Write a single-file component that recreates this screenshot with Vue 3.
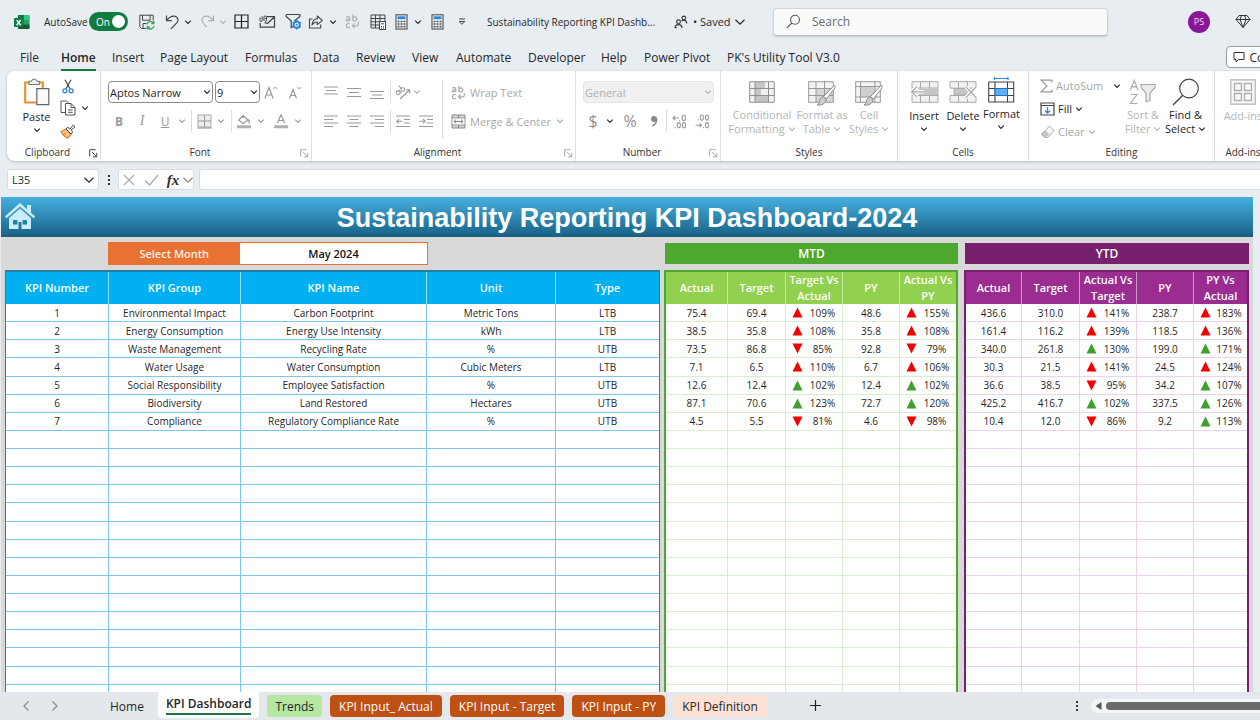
<script setup>
import { h } from 'vue'

const glyphs = {
  chev: [8, 8, '<path d="M1.2 2.6 4 5.4 6.8 2.6" stroke="currentColor" fill="none" stroke-width="1.2"/>'],
  chevWide: [12, 8, '<path d="M1.5 1.8 6 6.2 10.5 1.8" stroke="currentColor" fill="none" stroke-width="1.2"/>'],
  left: [8, 12, '<path d="M6.5 1.5 2 6l4.500 4.500" stroke="currentColor" fill="none" stroke-width="1.2"/>'],
  right: [8, 12, '<path d="M1.500 1.500 6 6l-4.500 4.500" stroke="currentColor" fill="none" stroke-width="1.2"/>'],
  excel: [16, 16, '<rect x="4" y="1" width="11.500" height="14" rx="1" fill="#21a366"/><path d="M4 1h6v5H4z" fill="#107c41"/><path d="M10 1h4.500a1 1 0 0 1 1 1v4H10z" fill="#33c481"/><path d="M4 10.500h11.500V14a1 1 0 0 1-1 1H5a1 1 0 0 1-1-1z" fill="#185c37"/><rect x="0" y="4" width="9.500" height="9" rx="1" fill="#107c41"/><path d="M2.700 6l4 5.200M6.700 6l-4 5.200" stroke="#fff" stroke-width="1.400"/>'],
  save: [16, 16, '<path d="M7 14.500H2.500l-1.700-1.700V1.200h13.400v5.300M3.500 1.200v5h7.600v-5M4 14.500V9.500h3.500" stroke="#444" fill="none"/><path d="M8 10.500a3.600 3.600 0 0 1 6.300-1.600M14.800 7v2.500h-2.500M15 12a3.600 3.600 0 0 1-6.300 1.700M8.200 15.500V13h2.500" stroke="#2fa25e" stroke-width="1.300" fill="none"/>'],
  undo: [16, 16, '<path d="M1.500 1.500v5.200h5.300M1.700 6.500C4 3.500 6.500 1.800 9.500 2.200c3.300.5 4.600 4 2.500 6.500L6 14.800" stroke="#444" fill="none" stroke-width="1.200"/>'],
  redo: [16, 16, '<path d="M13.500 1.500v5.200H8.200M13.300 6.500C11 3.500 8.500 1.800 5.500 2.200c-3.300.5-4.600 4-2.500 6.500l3.500 4.500" stroke="currentColor" fill="none" stroke-width="1.200"/>'],
  grid: [15, 15, '<path d="M1 1h13v13H1zM7.500 1v13M1 7.500h13" stroke="#222" fill="none" stroke-width="1.200"/>'],
  mail: [17, 14, '<path d="M7.500 1.700h8v10.500H1.200V8M15.500 1.700 8.500 8.500 5.500 7.500" stroke="#444" fill="none" stroke-width="1.200"/><path d="M3.200 1.200v4.300a1.100 1.100 0 0 1-2.200 0V2.500M5 6V2.200a1.200 1.200 0 0 1 2.500 0v3.200a1.200 1.200 0 0 1-1.500 1M5.800 3.500h1" stroke="#444" fill="none"/>'],
  funnel: [17, 17, '<path d="M1.200 1.500h13.600v2L9.500 8M1.200 1.500v2l5 4.600v6.400l2-1" stroke="#444" fill="none" stroke-width="1.200"/><circle cx="11.700" cy="11.700" r="3.100" stroke="#2482d6" stroke-width="1.800" fill="#e8edf1"/><path d="M11.700 7v2M11.700 14.400v2M7.600 9.400l1.700 1M14 13l1.800 1M7.600 14l1.700-1M14 10.400l1.800-1" stroke="#2482d6" stroke-width="1.400"/><circle cx="11.700" cy="11.700" r="1" fill="#2482d6"/>'],
  share: [16, 16, '<path d="M4.500 5H1.500v9h11.200v-3.500" stroke="#444" fill="none" stroke-width="1.100"/><path d="M9.300 2v2.700C6 5 4.500 7.500 4 10.800c1.500-2 3-2.800 5.300-2.800v2.700L14.300 6.300z" stroke="#444" fill="none" stroke-width="1.100" stroke-linejoin="round"/>'],
  wrap: [15, 15, '<g fill="none" stroke="currentColor" stroke-width="1.200"><path d="M1.300 3.200c1.400-1 3.500-.8 3.500.8v2.800M4.800 4.800c-4-.3-4.600 2-2.400 2 1.300 0 2.400-.8 2.400-1.600"/><path d="M7.800.5v6.300M7.800 4.900c0-2.800 4-2.800 4 0s-4 2.800-4 0"/><path d="M4.800 9.800c-2-1.200-3.500.2-3.500 1.800s1.700 2.900 3.500 1.700"/><path d="M13.300 8v2.200a1.600 1.600 0 0 1-1.600 1.600H7.500M9.700 9.500l-2.300 2.300 2.300 2.300"/></g>'],
  pivot: [16, 16, '<path d="M1 1h14v6M1 1v13h8M1 4.500h14M1 7.800h9M1 11h8M5.500 1v13M10 1v6" stroke="#444" fill="none"/><rect x="9.500" y="7.500" width="6" height="8" fill="#fff" stroke="#444"/><rect x="11" y="9" width="3" height="1.500" fill="#3b95dd"/><path d="M11 12.500h3M11 14h3" stroke="#444" stroke-dasharray="1 1"/>'],
  calc: [13, 16, '<rect x="1" y=".8" width="11" height="14.200" fill="#fff" stroke="#555" stroke-width="1.200"/><rect x="2.500" y="2.300" width="8" height="3" fill="#2b88d8"/><path d="M2.500 7.500h8M2.500 10h8M2.500 12.700h8" stroke="#444" stroke-width="1.700" stroke-dasharray="2 1"/>'],
  custom: [8, 8, '<path d="M1 1h6M1.200 3.500 4 6.300l2.800-2.800z" stroke="#444" fill="none"/>'],
  people: [14, 14, '<g stroke="#333" fill="none" stroke-width="1.100"><circle cx="4.500" cy="6.800" r="1.900"/><path d="M1 13c0-4.500 7-4.500 7 0"/><circle cx="9.800" cy="2.900" r="1.800"/><path d="M7.500 6.200c2-2 5.300-1 5.300 2.300M1 12.800h1.800"/></g>'],
  search: [15, 15, '<circle cx="9" cy="5.700" r="4.500" stroke="#555" fill="none" stroke-width="1.100"/><path d="M5.800 9 1 13.800" stroke="#555" stroke-width="1.200"/>'],
  gem: [16, 15, '<path d="M4 1.500h8l3 4-7 8-7-8zM1 5.500h14M5 5.500l3 8 3-8M5 5.500 6.500 1.500M11 5.500 9.500 1.500" stroke="#333" fill="none" stroke-linejoin="round"/>'],
  comment: [12, 12, '<path d="M1 1.500h10v7H5.500L3 11V8.500H1z" stroke="#333" fill="none"/>'],
  paste: [27, 28, '<path d="M2.200 4.500h17.600v20H2.200z" fill="#fff" stroke="#e8912d" stroke-width="2.200"/><path d="M6 6.500V3.200h2.500C9.300.2 13 .2 13.800 3.200h2.500v3.300z" fill="#f4f4f4" stroke="#777" stroke-width="1.100"/><path d="M13.800 10.700h12v16h-12z" fill="#fafafa" stroke="#666" stroke-width="1.200"/>'],
  cut: [12, 15, '<path d="M3 .8 8 9.700M9 .8 4 9.700" stroke="#444" stroke-width="1.200"/><circle cx="2.900" cy="11.800" r="2" fill="none" stroke="#2b88d8" stroke-width="1.300"/><circle cx="9.100" cy="11.800" r="2" fill="none" stroke="#2b88d8" stroke-width="1.300"/>'],
  copy: [16, 16, '<path d="M5 12.500H1V1h5.500L8.500 3M5.500 3.500H11l4 4V15H5.500zM11 3.500v4h4M8 10h4.500M8 12.300h4.500" stroke="#555" fill="none"/>'],
  brush: [16, 15, '<path d="M1 7.500 6 5l5 5.200L8 14C4.500 12.700 2.300 10.500 1 7.500z" fill="#f8c78e" stroke="#e8832d" stroke-width="1.300"/><path d="M3 10.500 6 9" stroke="#e8832d"/><path d="M6 5l1.800-1.800L9.800 5l3.500-4 1.700 1.700L11 6.300 12.700 8 11 10z" fill="#fff" stroke="#444"/>'],
  launch: [9, 9, '<path d="M.7 7.500V.7h6M3 3l4.500 4.500M7.800 3.800v4H3.800" stroke="currentColor" fill="none"/>'],
  borders: [15, 15, '<rect x="1" y="1" width="13" height="12" fill="#ededed" stroke="#aaa"/><path d="M7.500 1v12M1 7h13" stroke="#999"/><path d="M.5 14h14" stroke="#888"/>'],
  bucket: [16, 15, '<path d="M7 1.500 12 6 7 9.800 2.800 6zM7 4V.8M12 5.500c1.500 1 1.500 2.500 1 4" fill="none" stroke="#999" stroke-width="1.200"/><path d="M1 11.200h14v3H1z" fill="#b0b0b0"/>'],
  fontColor: [16, 15, '<path d="M4.300 9.300 8 .8l3.700 8.500M5.500 6.500h5" fill="none" stroke="#999" stroke-width="1.200"/><path d="M1 11.200h14v3H1z" fill="#b0b0b0"/>'],
  grow: [14, 15, '<path d="M.8 13.500 5 2.500l4.200 11M2.200 10h5.600" stroke="#999" fill="none" stroke-width="1.200"/><path d="m9.500 4 1.900-2L13.300 4" stroke="#999" fill="none"/>'],
  shrink: [14, 15, '<path d="M1.500 13.500 5 4.500l3.500 9M2.700 10.500h4.600" stroke="#999" fill="none" stroke-width="1.200"/><path d="m9.500 2 1.900 2 1.900-2" stroke="#999" fill="none"/>'],
  top: [14, 15, '<path d="M0 2h14M2 5.500h10M0 9h14" stroke="#999" stroke-width="1.200"/>'],
  mid: [14, 15, '<path d="M0 3.500h14M2 7.500h10M0 11.500h14" stroke="#999" stroke-width="1.200"/>'],
  bot: [14, 15, '<path d="M0 6.500h14M2 10h10M0 13.500h14" stroke="#999" stroke-width="1.200"/>'],
  alL: [14, 13, '<path d="M0 1h14M0 4.500h9M0 8h14M0 11.500h9" stroke="#999" stroke-width="1.200"/>'],
  alC: [14, 13, '<path d="M0 1h14M2.500 4.500h9M0 8h14M2.500 11.500h9" stroke="#999" stroke-width="1.200"/>'],
  alR: [14, 13, '<path d="M0 1h14M5 4.500h9M0 8h14M5 11.500h9" stroke="#999" stroke-width="1.200"/>'],
  outdent: [14, 13, '<path d="M0 1h14M8 4.500h6M8 8h6M0 11.500h14M1 6.300h5.500M3 4.200.8 6.300 3 8.400" stroke="#999" fill="none" stroke-width="1.100"/>'],
  indent: [14, 13, '<path d="M0 1h14M8 4.500h6M8 8h6M0 11.500h14M.5 6.300H6M4 4.200l2.200 2.100L4 8.400" stroke="#999" fill="none" stroke-width="1.100"/>'],
  orient: [16, 15, '<g fill="none" stroke="#999" stroke-width="1.100"><circle cx="3.200" cy="7.800" r="1.900"/><path d="m3.700 5.200 2.600 2.900"/><circle cx="7.800" cy="4.600" r="1.900"/><path d="m3.800.7 3 3.500"/><path d="M5 14 14.500 5M11 4.800h3.700v3.700"/></g>'],
  merge: [15, 15, '<path d="M1 1h13v13H1zM1 4h13M1 11h13M7.500 1v3M7.500 11v3" stroke="#888" fill="#d8d8d8"/><path d="M1.500 4.500h12v6h-12z" fill="#f4f4f4"/><path d="M3 7.500h9M5 5.700 3 7.500l2 1.800M10 5.700l2 1.800-2 1.800" stroke="#888" fill="none"/>'],
  comma: [8, 12, '<circle cx="4" cy="4" r="3" fill="#888"/><path d="M6.500 3.500c.5 3.500-1 6-4 7.500" stroke="#888" stroke-width="1.500" fill="none"/>'],
  moreDec: [15, 15, '<g fill="none" stroke="#999" stroke-width="1.100"><path d="M7 4H1M3 2 1 4l2 2M7.500 6.200v1"/><ellipse cx="11.800" cy="4" rx="1.600" ry="2.700"/><ellipse cx="6.800" cy="11.200" rx="1.600" ry="2.600"/><ellipse cx="12" cy="11.200" rx="1.600" ry="2.600"/><path d="M3 13v1.200"/></g>'],
  lessDec: [15, 15, '<g fill="none" stroke="#999" stroke-width="1.100"><path d="M.5 11.300h6M4.500 9.300l2 2-2 2M8.500 13v1.200"/><ellipse cx="12" cy="11.200" rx="1.600" ry="2.600"/><ellipse cx="6.800" cy="3.600" rx="1.600" ry="2.600"/><ellipse cx="12" cy="3.600" rx="1.600" ry="2.600"/><path d="M3.500 5.300v1.200"/></g>'],
  cond: [26, 22, '<path d="M.7.700h24.600v20.600H.7z" fill="#f1f1f1"/><path d="M6 1h10v6.500H6zM6 8h6v6.500H6zM6 14.500h13V21H6z" fill="#c4c4c4"/><path d="M.7.700h24.600v20.600H.7zM.7 7.500h24.600M.7 14.500h24.600M6 .7v20.600M19.500.7v20.600" stroke="#8f8f8f" fill="none"/>'],
  fmtTable: [28, 26, '<path d="M.7.700h24.600v20.600H.7z" fill="#f4f4f4"/><path d="M8 7h17.300v14H8z" fill="#d6d6d6"/><path d="M.7.700h24.600v20.600H.7zM.7 7.500h24.600M.7 14.500h24.600M8 .7v20.600M16.500.7v20.600" stroke="#999" fill="none"/><path d="M26 4.500c1.500 0 1.500 1.200.8 2.500L18.500 18l-3-2.500z" fill="#fff" stroke="#888"/><path d="M15 15.500l3.300 3c-.8 4.500-5 6-9.300 5.500 3-1.500 2-7 6-8.500z" fill="#ccc" stroke="#888"/>'],
  cellStyle: [28, 26, '<path d="M.7.700h24.600v20.600H.7z" fill="#f4f4f4"/><path d="M6 6h14v10H6z" fill="#cfcfcf"/><path d="M.7.700h24.600v20.600H.7zM.7 5.500h24.600M.7 16h24.600M5.500.7v20.600M20 .7v20.600" stroke="#999" fill="none"/><path d="M26 4.500c1.500 0 1.500 1.200.8 2.500L18.500 18l-3-2.500z" fill="#fff" stroke="#888"/><path d="M15 15.500l3.300 3c-.8 4.500-5 6-9.300 5.500 3-1.500 2-7 6-8.500z" fill="#ccc" stroke="#888"/>'],
  insert: [29, 22, '<path d="M2 .7h26v20.600H2zM2 7h26M2 14.500h26M10.500.7v20.600M19.500.7v20.600" stroke="#aaa" fill="#f2f2f2"/><path d="M9 7.500h19v6.500H9z" fill="#c6c6c6"/><path d="M14 10.800H2M7 5.500 1.500 10.800 7 16" stroke="#fff" stroke-width="3.500" fill="none"/><path d="M14 10.800H1.500M7 5.500 1.500 10.800 7 16" stroke="#aaa" stroke-width="1.200" fill="none"/>'],
  remove: [29, 22, '<path d="M1 .7h26v6.500H1zM1 14.500h26v6.800H1zM9.500.7v6.500M18.500.7v6.500M9.500 14.500v6.800M18.500 14.500v6.800" stroke="#aaa" fill="#f2f2f2"/><path d="M5 7.500h13v6.500H5z" fill="#c6c6c6" stroke="#aaa"/><path d="m17 6 10 10.500M27 6 17 16.500" stroke="#fff" stroke-width="3.500"/><path d="m17 6 10 10.500M27 6 17 16.500" stroke="#aaa" stroke-width="1.200"/>'],
  format: [27, 26, '<path d="M6.500 1.500h13.500M6.500 0v3M20 0v3" stroke="#2b88d8" stroke-width="1.200"/><path d="M.7 5h25v20H.7zM.7 11.500h25M.7 18.500h25M7 5v20M19.500 5v20" stroke="#444" fill="#fff" stroke-width="1.100"/><path d="M7 11.500h12.500v7H7z" fill="#62aef0" stroke="#1a73c4"/>'],
  sum: [13, 14, '<path d="M12 3.500V1.200H1.200L7 7 1.200 12.800H12v-2.300" stroke="#999" fill="none" stroke-width="1.200"/>'],
  fill: [15, 14, '<path d="M1 1h13v12H1zM1 3.500h13" stroke="#444" fill="#fff" stroke-width="1.200"/><path d="M7.500 5v6M5 8.500 7.500 11 10 8.500" stroke="#2b88d8" fill="none" stroke-width="1.300"/>'],
  eraser: [15, 14, '<path d="M5 6 9.500 1 14 5.500 8 12.500H4.500L1 9z" stroke="#aaa" fill="#f6f6f6"/><path d="M5 5.500 1 9l3.500 3.500H6L9.500 9z" fill="#c4c4c4"/>'],
  sort: [28, 26, '<g stroke="#aaa" fill="none" stroke-width="1.200"><path d="m1.500 11 3.700-9.500L9 11M2.800 7.800h5M1.700 15.500H8L1.500 24.500h7"/><path d="M12 5.500h14v3L21 14v7.500l-4 1V14l-5-5.500z" fill="#ececec"/></g>'],
  find: [28, 28, '<circle cx="17" cy="10.500" r="9.300" fill="#fafafa" stroke="#444" stroke-width="1.200"/><path d="M10.500 17.500 1 27" stroke="#444" stroke-width="1.400"/>'],
  addins: [26, 26, '<path d="M.8.800h24.400v24.400H.8z" fill="#fafafa" stroke="#b0b0b0" stroke-width="1.200"/><path d="M4.500 4.500h7v7h-7zM14.500 4.500h7v7h-7zM4.500 14.500h7v7h-7zM14.500 14.500h7v7h-7z" fill="none" stroke="#b0b0b0" stroke-width="1.400"/>'],
  cross: [12, 12, '<path d="m1 1 10 10M11 1 1 11" stroke="#aaa" stroke-width="1.200"/>'],
  tick: [15, 12, '<path d="m1 6.500 4.500 4.500L14 1" stroke="#aaa" fill="none" stroke-width="1.200"/>'],
  dots: [4, 12, '<path d="M1 1h2v2H1zM1 5h2v2H1zM1 9h2v2H1z" fill="#333"/>'],
  house: [32, 28, '<g fill="#c9edfb"><path d="M16 1 .8 14.500 2.500 16.300 16 4.500l13.500 11.800 1.700-1.800L27 10.800V3h-4v4.200z"/><path d="M16 6.500 5 16v11h22V16zM9 18h4.500v4.500H9zM18.500 18H23v4.500h-4.500zM14.500 20h3v7h-3z" fill-rule="evenodd"/></g>'],
  up: [11, 11, '<path d="M5.500.5 10.500 10.500H.5z" fill="currentColor"/>'],
  down: [11, 11, '<path d="M.5.500h10L5.500 10.500z" fill="currentColor"/>'],
  scrollL: [7, 8, '<path d="M6.500 0v8L.5 4z" fill="#555"/>'],
  plus: [11, 11, '<path d="M5.500 0v11M0 5.500h11" stroke="#222" stroke-width="1.200"/>']
}

const Icon = (props) => {
  const [w, ht, body] = glyphs[props.n]
  return h('svg', { width: w, height: ht, viewBox: `0 0 ${w} ${ht}`, 'aria-hidden': 'true', innerHTML: body })
}
Icon.props = ['n']

const menu = ['File', 'Home', 'Insert', 'Page Layout', 'Formulas', 'Data', 'Review', 'View', 'Automate', 'Developer', 'Help', 'Power Pivot', "PK's Utility Tool V3.0"]

const kpis = [
  ['1', 'Environmental Impact', 'Carbon Footprint', 'Metric Tons', 'LTB'],
  ['2', 'Energy Consumption', 'Energy Use Intensity', 'kWh', 'LTB'],
  ['3', 'Waste Management', 'Recycling Rate', '%', 'UTB'],
  ['4', 'Water Usage', 'Water Consumption', 'Cubic Meters', 'LTB'],
  ['5', 'Social Responsibility', 'Employee Satisfaction', '%', 'UTB'],
  ['6', 'Biodiversity', 'Land Restored', 'Hectares', 'UTB'],
  ['7', 'Compliance', 'Regulatory Compliance Rate', '%', 'UTB']
]
// Ratio cells carry a direction (u/d) and a status colour (r/g) before the percentage.
const mtd = [
  ['75.4', '69.4', 'ur109%', '48.6', 'ur155%'],
  ['38.5', '35.8', 'ur108%', '35.8', 'ur108%'],
  ['73.5', '86.8', 'dr85%', '92.8', 'dr79%'],
  ['7.1', '6.5', 'ur110%', '6.7', 'ur106%'],
  ['12.6', '12.4', 'ug102%', '12.4', 'ug102%'],
  ['87.1', '70.6', 'ug123%', '72.7', 'ug120%'],
  ['4.5', '5.5', 'dr81%', '4.6', 'dr98%']
]
const ytd = [
  ['436.6', '310.0', 'ur141%', '238.7', 'ur183%'],
  ['161.4', '116.2', 'ur139%', '118.5', 'ur136%'],
  ['340.0', '261.8', 'ug130%', '199.0', 'ug171%'],
  ['30.3', '21.5', 'ur141%', '24.5', 'ur124%'],
  ['36.6', '38.5', 'dr95%', '34.2', 'ug107%'],
  ['425.2', '416.7', 'ug102%', '337.5', 'ug126%'],
  ['10.4', '12.0', 'dr86%', '9.2', 'ug113%']
]
const pad = (rows) => [...rows, ...Array.from({ length: 22 - rows.length }, () => ['', '', '', '', ''])]
const tables = [
  { id: 'kpi', heads: ['KPI Number', 'KPI Group', 'KPI Name', 'Unit', 'Type'], rows: pad(kpis) },
  { id: 'mtd', heads: ['Actual', 'Target', 'Target Vs Actual', 'PY', 'Actual Vs PY'], rows: pad(mtd) },
  { id: 'ytd', heads: ['Actual', 'Target', 'Actual Vs Target', 'PY', 'PY Vs Actual'], rows: pad(ytd) }
]
const isRatio = (v) => /^[ud][rg]/.test(v)

const sheets = [
  ['Home', 'plain'], ['KPI Dashboard', 'active'], ['Trends', 'green'], ['KPI Input_ Actual', 'rust'],
  ['KPI Input - Target', 'rust'], ['KPI Input - PY', 'rust'], ['KPI Definition', 'peach']
]
</script>

<template>
  <div class="excel">
    <header class="titlebar">
      <Icon n="excel" />
      <span class="auto">AutoSave</span>
      <button class="toggle" aria-label="AutoSave">On<i></i></button>
      <button aria-label="Save"><Icon n="save" /></button>
      <button aria-label="Undo"><Icon n="undo" /></button>
      <button aria-label="Undo list"><Icon n="chev" /></button>
      <button class="off" aria-label="Redo"><Icon n="redo" /></button>
      <button class="off" aria-label="Redo list"><Icon n="chev" /></button>
      <button aria-label="Borders"><Icon n="grid" /></button>
      <button aria-label="Mail"><Icon n="mail" /></button>
      <button aria-label="Filter"><Icon n="funnel" /></button>
      <button aria-label="Share"><Icon n="share" /></button>
      <button aria-label="Share options"><Icon n="chev" /></button>
      <button class="off" aria-label="Wrap"><Icon n="wrap" /></button>
      <button aria-label="Pivot"><Icon n="pivot" /></button>
      <button aria-label="Calculate"><Icon n="calc" /></button>
      <button aria-label="Calculate options"><Icon n="chev" /></button>
      <button aria-label="Calculator"><Icon n="calc" /></button>
      <button aria-label="Customize toolbar"><Icon n="custom" /></button>
      <span class="doc">Sustainability Reporting KPI Dashb...</span>
      <Icon n="people" />
      <span class="saved">• Saved</span>
      <button aria-label="File status"><Icon n="chevWide" /></button>
      <label class="search"><Icon n="search" /><input type="text" placeholder="Search" aria-label="Search" /></label>
      <button class="avatar" aria-label="Account">PS</button>
      <button aria-label="Premium"><Icon n="gem" /></button>
    </header>

    <nav class="menu">
      <a v-for="m in menu" :key="m" href="#" :class="{ on: m === 'Home' }">{{ m }}</a>
      <button class="comments"><Icon n="comment" />Comments</button>
    </nav>

    <section class="ribbon">
      <div class="group">
        <div class="body clip">
          <button class="big paste"><Icon n="paste" />Paste<Icon n="chev" /></button>
          <div class="stack">
            <button aria-label="Cut"><Icon n="cut" /></button>
            <button aria-label="Copy"><Icon n="copy" /></button>
            <button aria-label="Format painter"><Icon n="brush" /></button>
          </div>
          <button aria-label="Copy options"><Icon n="chev" /></button>
        </div>
        <footer class="launchable">Clipboard<Icon n="launch" class="launch dark" /></footer>
      </div>

      <div class="group">
        <div class="body two">
          <div class="fontrow">
            <label class="drop"><select aria-label="Font"><option>Aptos Narrow</option></select><Icon n="chev" /></label>
            <label class="drop"><select aria-label="Font size"><option>9</option></select><Icon n="chev" /></label>
            <button aria-label="Increase font size"><Icon n="grow" /></button>
            <button aria-label="Decrease font size"><Icon n="shrink" /></button>
          </div>
          <div class="fmt">
            <button><b>B</b></button><button><em>I</em></button><button><u>U</u></button>
            <button aria-label="Underline options"><Icon n="chev" /></button><i class="sep"></i>
            <button aria-label="Borders"><Icon n="borders" /></button>
            <button aria-label="Border options"><Icon n="chev" /></button><i class="sep"></i>
            <button aria-label="Fill color"><Icon n="bucket" /></button>
            <button aria-label="Fill options"><Icon n="chev" /></button>
            <button aria-label="Font color"><Icon n="fontColor" /></button>
            <button aria-label="Font color options"><Icon n="chev" /></button>
          </div>
        </div>
        <footer class="launchable">Font<Icon n="launch" class="launch" /></footer>
      </div>

      <div class="group">
        <div class="body align">
          <div class="alignment">
            <button aria-label="Top align"><Icon n="top" /></button>
            <button aria-label="Middle align"><Icon n="mid" /></button>
            <button aria-label="Bottom align"><Icon n="bot" /></button>
            <i class="sep"></i>
            <button aria-label="Orientation"><Icon n="orient" /></button>
            <button class="start" aria-label="Orientation options"><Icon n="chev" /></button>
            <button aria-label="Align left"><Icon n="alL" /></button>
            <button aria-label="Center"><Icon n="alC" /></button>
            <button aria-label="Align right"><Icon n="alR" /></button>
            <i class="sep"></i>
            <button aria-label="Decrease indent"><Icon n="outdent" /></button>
            <button aria-label="Increase indent"><Icon n="indent" /></button>
          </div>
          <div class="wraps">
            <button class="line"><Icon n="wrap" />Wrap Text</button>
            <button class="line"><Icon n="merge" />Merge &amp; Center<Icon n="chev" class="far" /></button>
          </div>
        </div>
        <footer class="launchable">Alignment<Icon n="launch" class="launch" /></footer>
      </div>

      <div class="group">
        <div class="body two">
          <label class="drop disabled"><select disabled aria-label="Number format"><option>General</option></select><Icon n="chev" /></label>
          <div class="num">
            <button class="sign">$</button><button class="ink" aria-label="Currency options"><Icon n="chev" /></button>
            <button class="sign">%</button><button aria-label="Comma style"><Icon n="comma" /></button><i class="sep"></i>
            <button aria-label="Increase decimal"><Icon n="moreDec" /></button>
            <button aria-label="Decrease decimal"><Icon n="lessDec" /></button>
          </div>
        </div>
        <footer class="launchable">Number<Icon n="launch" class="launch" /></footer>
      </div>

      <div class="group">
        <div class="body styles">
          <button class="big off"><Icon n="cond" /><span>Conditional<br />Formatting <Icon n="chev" /></span></button>
          <button class="big off"><Icon n="fmtTable" /><span>Format as<br />Table <Icon n="chev" /></span></button>
          <button class="big off"><Icon n="cellStyle" /><span>Cell<br />Styles <Icon n="chev" /></span></button>
        </div>
        <footer>Styles</footer>
      </div>

      <div class="group">
        <div class="body cells">
          <button class="big"><Icon n="insert" />Insert<Icon n="chev" /></button>
          <button class="big"><Icon n="remove" />Delete<Icon n="chev" /></button>
          <button class="big"><Icon n="format" />Format<Icon n="chev" /></button>
        </div>
        <footer>Cells</footer>
      </div>

      <div class="group">
        <div class="body editing">
          <div class="lines">
            <button class="line"><Icon n="sum" />AutoSum<Icon n="chev" class="far ink" /></button>
            <button class="line ink"><Icon n="fill" />Fill<Icon n="chev" /></button>
            <button class="line"><Icon n="eraser" />Clear<Icon n="chev" /></button>
          </div>
          <button class="big off"><Icon n="sort" /><span>Sort &amp;<br />Filter <Icon n="chev" /></span></button>
          <button class="big"><Icon n="find" /><span>Find &amp;<br />Select <Icon n="chev" /></span></button>
        </div>
        <footer>Editing</footer>
      </div>

      <div class="group last">
        <div class="body addins"><button class="big off"><Icon n="addins" /><span>Add-ins</span></button></div>
        <footer>Add-ins</footer>
      </div>
    </section>

    <section class="formula">
      <label class="namebox"><input type="text" value="L35" aria-label="Name box" /><Icon n="chevWide" /></label>
      <Icon n="dots" />
      <div class="fx">
        <button aria-label="Cancel"><Icon n="cross" /></button>
        <button aria-label="Enter"><Icon n="tick" /></button>
        <button class="fn">fx</button>
        <button aria-label="Formula options"><Icon n="chevWide" /></button>
      </div>
      <input class="entry" type="text" aria-label="Formula" />
    </section>

    <main class="sheet">
      <div class="canvas">
        <div class="banner">
          <a href="#" aria-label="Home"><Icon n="house" /></a>
          <h1>Sustainability Reporting KPI Dashboard-2024</h1>
        </div>
        <div class="board">
          <div class="picker"><b>Select Month</b><strong>May 2024</strong></div>
          <div class="band mtd">MTD</div>
          <div class="band ytd">YTD</div>
          <table v-for="t in tables" :key="t.id" :class="t.id">
            <colgroup><col v-for="n in 5" :key="n" :class="'c' + n" /></colgroup>
            <thead><tr><th v-for="(x, i) in t.heads" :key="i" scope="col">{{ x }}</th></tr></thead>
            <tbody>
              <tr v-for="(r, i) in t.rows" :key="i">
                <td v-for="(v, j) in r" :key="j">
                  <span v-if="isRatio(v)" class="ratio">
                    <Icon :n="v[0] === 'u' ? 'up' : 'down'" :class="v[1] === 'r' ? 'red' : 'grn'" />{{ v.slice(2) }}
                  </span>
                  <template v-else>{{ v }}</template>
                </td>
              </tr>
            </tbody>
          </table>
        </div>
      </div>
    </main>

    <footer class="tabs">
      <div class="arrows">
        <button aria-label="Previous sheets"><Icon n="left" /></button>
        <button aria-label="Next sheets"><Icon n="right" /></button>
      </div>
      <button v-for="[name, kind] in sheets" :key="name" class="tab" :class="kind"><span>{{ name }}</span></button>
      <button class="add" aria-label="New sheet"><Icon n="plus" /></button>
      <Icon n="dots" />
      <div class="scroll"><Icon n="scrollL" /><i></i></div>
    </footer>
  </div>
</template>

<style>
html, body { margin: 0; overflow: hidden; }
</style>

<style scoped>
.excel { height: 100vh; display: flex; flex-direction: column; overflow: hidden; background: #e8edf1; color: #262626; font-family: "Open Sans", "Noto Sans", sans-serif; font-size: 11px; }
.excel * { box-sizing: border-box; }
button { border: 0; padding: 0; background: none; font: inherit; color: inherit; display: flex; align-items: center; justify-content: center; }
input, select { border: 0; background: none; font: inherit; color: inherit; outline: 0; min-width: 0; }
svg { flex: none; display: block; }
a { color: inherit; text-decoration: none; }
.off { color: #b0b0b0; }

.titlebar { flex: none; height: 43px; padding: 0 9px 0 14px; display: grid; align-items: center; justify-items: start; white-space: nowrap;
  grid-template-columns: 30px 45px 50px 26px 19px 16px 19px 15px 25px 26px 23px 21px 16px 25px 25px 19px 17px 27px 29px 187px 19px 41px 39px 1fr 47px 16px; }
.auto, .doc { font-size: 10px; }
.saved { font-size: 11px; }
.toggle { width: 39px; height: 19px; padding: 0 3px 0 7px; border-radius: 10px; background: #107c41; color: #fff; justify-content: space-between; font-size: 10px; }
.toggle i { width: 13px; height: 13px; border-radius: 50%; background: #fff; }
.search { justify-self: stretch; height: 28px; margin-right: 80px; padding: 0 12px; display: flex; align-items: center; gap: 9px; background: #fafafa; border: 1px solid #d2d5d9; border-bottom-color: #b5b8bc; border-radius: 4px; box-shadow: 0 1px 2px #0002; }
.search input { flex: 1; font-size: 12px; }
.search input::placeholder { color: #6a6a6a; opacity: 1; }
.avatar { width: 22px; height: 22px; border-radius: 50%; background: #881798; color: #f3dff5; font-size: 9px; }

.menu { flex: none; height: 28px; padding-left: 20px; display: grid; align-items: center; justify-items: start; white-space: nowrap; font-size: 12px;
  grid-template-columns: 41px 51px 48px 85px 68px 43px 56px 44px 72px 73px 43px 83px 1fr 34px; }
.menu .on { font-weight: 600; height: 24px; line-height: 21px; align-self: end; border-bottom: 2px solid #107c41; }
.comments { height: 22px; width: 92px; gap: 4px; background: #fff; border: 1px solid #9a9a9a; border-radius: 4px; font-size: 12px; }

.ribbon { flex: none; height: 90px; margin-left: 7px; display: grid; background: #fff; border-radius: 8px 0 0 8px; box-shadow: 0 1px 3px #0003; font-size: 11px;
  grid-template-columns: 94px 211px 264px 145px 177px 131px 186px minmax(46px, 1fr); overflow: hidden; }
.group { display: flex; flex-direction: column; border-right: 1px solid #dcdcdc; min-width: 0; }
.last { border-right: 0; }
.body { height: 73px; color: #a8a8a8; }
.group footer { position: relative; flex: 1; text-align: center; font-size: 10px; line-height: 16px; color: #333; }
.group .launchable { padding-right: 12px; }
.launch { position: absolute; right: 2px; top: 5px; color: #aaa; }
.dark { color: #444; }
.ink { color: #262626; }
.sep { width: 1px; height: 22px; background: #dcdcdc; }
.big { flex-direction: column; justify-content: flex-start; color: #262626; line-height: 14px; white-space: nowrap; }
.big.off { color: #b4b4b4; }
.big > svg:first-child { margin-bottom: 4px; }
.big > svg:last-child { margin-top: 2px; }
.big span svg { display: inline-block; }

.clip { display: grid; grid-template-columns: 47px 15px 20px; padding: 7px 0 0 6px; justify-items: center; }
.paste { width: 47px; }
.stack { display: grid; grid-template-rows: 16px 28px 18px; align-items: center; align-content: start; justify-items: center; }
.clip > :last-child { height: 60px; color: #333; }
.two { display: flex; flex-direction: column; gap: 6px; padding: 10px 6px 0 7px; }
.fontrow { display: grid; grid-template-columns: 105px 45px 18px 26px; column-gap: 2px; align-items: center; }
.drop { position: relative; height: 22px; display: flex; align-items: center; border: 1px solid #8a8a8a; border-radius: 4px; background: #fff; color: #262626; padding-right: 1px; }
.drop select { appearance: none; flex: 1; padding: 0 1px; }
.drop.disabled { background: #f0f0f0; border-color: #e4e4e4; color: #b0b0b0; }
.drop select:disabled { opacity: 1; }
.fmt { height: 24px; display: grid; align-items: center; justify-items: center; font-size: 12px; color: #999;
  grid-template-columns: 22px 24px 22px 12px 7px 18px 16px 5px 20px 14px 25px 10px; }
.fmt em { font-family: "Liberation Serif", serif; font-size: 14px; }
.align { display: grid; grid-template-columns: 122px 1fr; padding-left: 8px; }
.alignment { display: grid; grid-template-columns: 22px 24px 22px 5px 20px 26px; grid-template-rows: 24px 24px; row-gap: 5px; padding-top: 9px; align-items: center; justify-items: center; align-content: start; }
.start { justify-self: start; }
.wraps { margin: 9px 0 6px; border-left: 1px solid #dcdcdc; padding-left: 8px; display: flex; flex-direction: column; gap: 5px; }
.line { height: 24px; gap: 4px; width: 100%; justify-content: flex-start; white-space: nowrap; }
.wraps .far { margin: 0 11px 0 auto; }
.num { height: 24px; display: grid; grid-template-columns: 20px 14px 26px 22px 3px 22px 24px; align-items: center; justify-items: center; }
.sign { font-size: 16px; color: #909090; }
.styles { display: grid; grid-template-columns: 64px 56px 38px; padding: 10px 0 0 9px; justify-items: center; align-items: start; }
.styles .big > svg:first-child { height: 26px; margin-bottom: 1px; }
.styles .big:first-child > svg:first-child { height: 22px; margin-bottom: 5px; }
.cells { display: grid; grid-template-columns: 40px 38px 39px; padding: 6px 0 0 6px; justify-items: center; align-items: start; }
.cells .big > svg:first-child { margin: 4px 0 6px; }
.cells .big:last-child > svg:first-child { margin: 0 0 4px; }
.editing { display: grid; grid-template-columns: 81px 44px 41px; padding: 3px 0 0 11px; justify-items: center; }
.lines { width: 81px; }
.lines .line { height: 23px; gap: 3px; }
.lines .far { margin-left: auto; }
.editing > .big { padding-top: 4px; }
.editing .big > svg:first-child { height: 28px; margin-bottom: 2px; }
.addins { padding: 8px 0 0; display: grid; justify-items: center; width: 56px; }
.addins .big > svg:last-child { margin: 0; }
.last footer { padding: 0; width: 56px; }

.formula { flex: none; height: 21px; margin: 8px 0 7px 7px; display: grid; grid-template-columns: 92px 9px 76px 1fr; column-gap: 5px; align-items: stretch; font-size: 11px; }
.formula > svg { align-self: center; justify-self: center; }
.namebox, .fx, .entry { background: #fff; border: 1px solid #d8dbdf; border-radius: 3px; }
.namebox { display: flex; align-items: center; padding: 0 3px 0 4px; }
.namebox input { flex: 1; padding: 0; }
.fx { display: grid; grid-template-columns: 20px 24px 20px 10px; align-items: center; justify-items: center; color: #888; }
.fn { font: italic 700 15px/18px "Liberation Serif", serif; color: #333; }
.entry { border-right: 0; border-radius: 3px 0 0 3px; }

.sheet { flex: 1; min-height: 0; overflow: hidden; padding: 0 7px 0 1px; }
.canvas { background: #d9d9d9; }
.banner { height: 40px; display: grid; grid-template-columns: 40px 1fr 40px; align-items: center; background: linear-gradient(#47b0de, #19658a); border-bottom: 2px solid #1d5f80; }
.banner a { padding: 0 0 2px 3px; }
h1 { margin: 0; text-align: center; color: #fff; font: 700 27px/38px "Liberation Sans", Arial, sans-serif; white-space: nowrap; padding-top: 2px; }
.board { padding: 5px 5px 0 4px; display: grid; grid-template-columns: 654fr 4px 294fr 6px 285fr; row-gap: 5px; }
.kpi, .picker { grid-column: 1; }
.mtd { grid-column: 3; }
.ytd { grid-column: 5; }
.picker { display: grid; grid-template-columns: 103fr 132fr 187fr 232fr; height: 23px; line-height: 21px; text-align: center; font-size: 11px; }
.picker > * { border: 1px solid #e97132; font-weight: 600; }
.picker b { grid-column: 2; background: #e97132; color: #fdf3ec; }
.picker strong { background: #fff; color: #111; border-left: 0; }
.band { height: 21px; align-self: center; margin-left: 1px; line-height: 21px; text-align: center; color: #fff; font-size: 12px; font-weight: 600; }
.band.mtd { background: #4ea72e; }
.band.ytd { background: #78206e; }
table { width: 100%; height: 433px; table-layout: fixed; border-collapse: separate; border-spacing: 0; background: #fff; border: 2px solid var(--edge); border-bottom: 0; }
th { height: 32px; padding: 0; background: var(--head); color: #fff; font-size: 11px; line-height: 16px; font-weight: 600; border-right: 1px solid var(--tick); }
td { padding: 0; height: 18px; text-align: center; font-size: 10px; line-height: 16px; white-space: nowrap; border-right: 1px solid var(--line); border-bottom: 1px solid var(--line); }
th:last-child, td:last-child { border-right: 0; }
table.kpi { --edge: #2a7ba0; --head: #00b0f0; --tick: #8fdcf8; --line: #7cc8ec; border-width: 2px 1px 0; }
table.mtd { --edge: #4ea72e; --head: #92d050; --tick: #c5e8a4; --line: #d6eecf; }
table.ytd { --edge: #78206e; --head: #9b2c90; --tick: #cf9bca; --line: #eed2ec; }
.kpi .c1 { width: 103px; }
.kpi .c2 { width: 132px; }
.kpi .c3 { width: 186px; }
.kpi .c4 { width: 129px; }
.kpi .c5 { width: 103px; }
.mtd .c1 { width: 62px; }
.mtd .c2 { width: 58px; }
.mtd .c3, .mtd .c4 { width: 57px; }
.mtd .c5 { width: 56px; }
.ytd .c1 { width: 56px; }
.ytd .c2 { width: 58px; }
.ytd .c3, .ytd .c4 { width: 57px; }
.ytd .c5 { width: 53px; }
.ratio { display: grid; grid-template-columns: 22px 1fr; align-items: center; justify-items: center; padding-right: 5px; }
.red { color: #f00000; }
.grn { color: #3f9f2f; }

.tabs { flex: none; height: 28px; background: #e4e7ec; display: flex; align-items: flex-start; font-size: 12px; white-space: nowrap; }
.arrows { display: flex; width: 104px; height: 27px; padding-left: 22px; gap: 21px; color: #888; }
.tab { height: 22px; margin: 3px 8px 0 0; border-radius: 4px; padding: 0 9px; }
.tab.plain { padding: 0 6px; }
.tab.active { height: 26px; margin-top: 0; padding: 0 8px; background: #fff; border-radius: 0 0 4px 4px; font-weight: 600; }
.active span { line-height: 18px; border-bottom: 2px solid #217346; }
.tab.green { background: #b5e6a2; padding: 0 8px; }
.rust { background: #be5014; color: #fff; }
.peach { background: #fbe2d5; }
.add { width: 82px; height: 27px; margin-right: auto; }
.tabs > svg { margin: 8px 12px 0 0; }
.scroll { width: 169px; height: 14px; margin-top: 7px; padding-left: 4px; display: flex; align-items: center; gap: 4px; background: #f5f6f8; border-radius: 7px 0 0 7px; }
.scroll i { flex: 1; height: 8px; background: #6b6b6b; border-radius: 4px 0 0 4px; }
</style>
